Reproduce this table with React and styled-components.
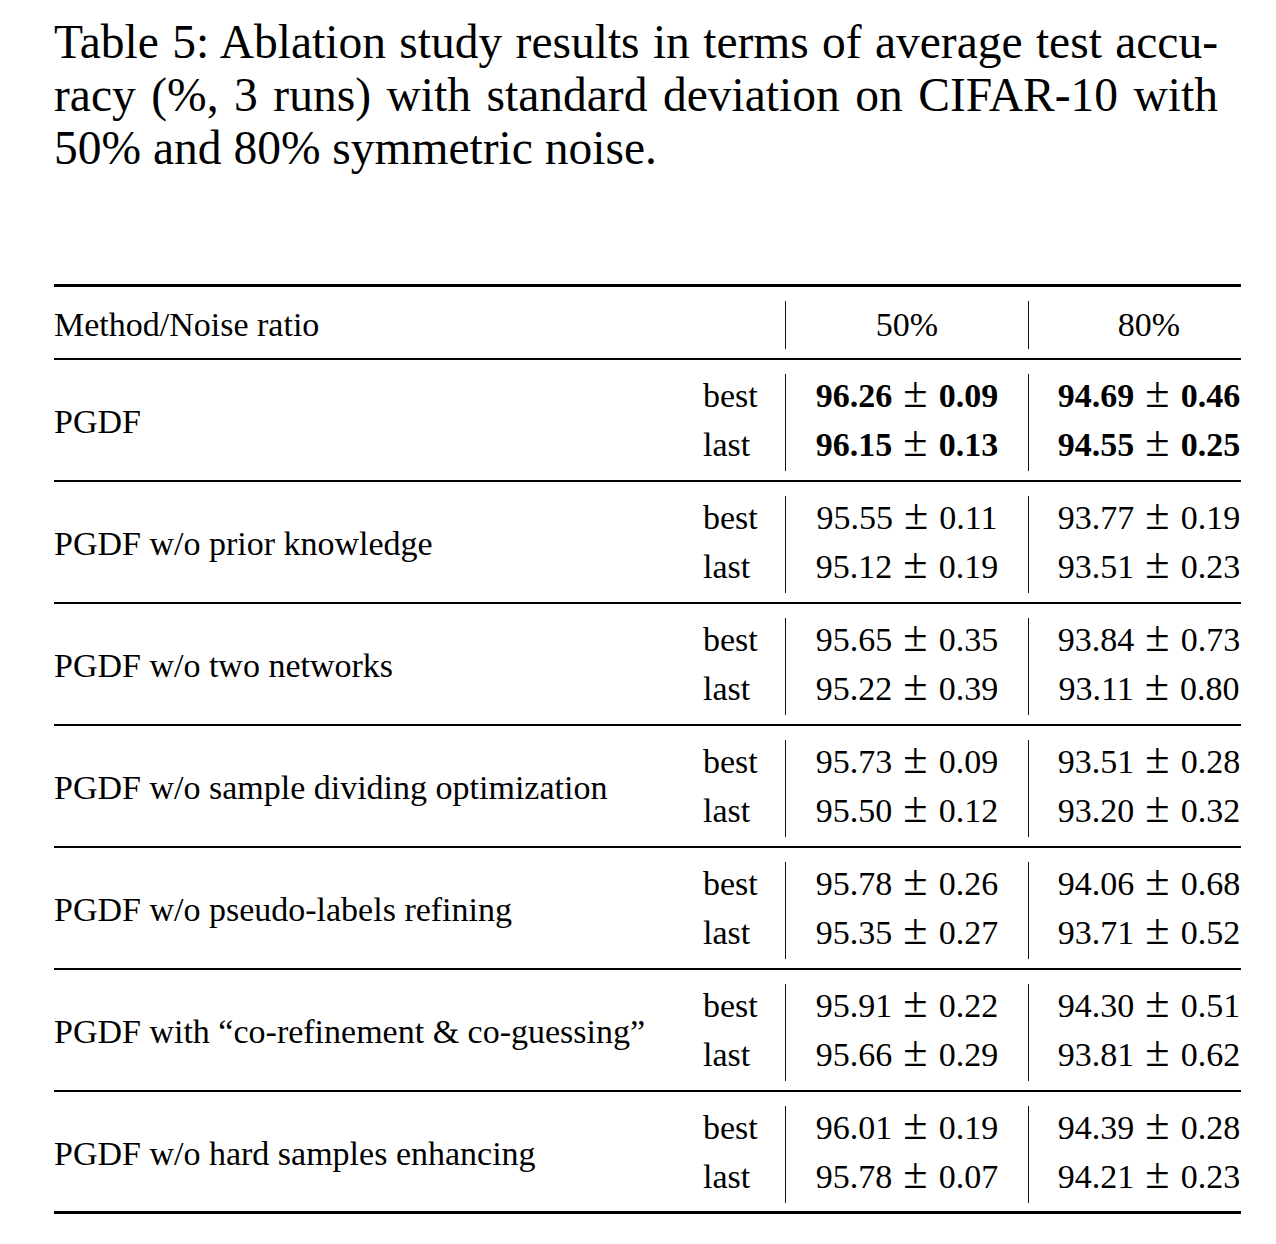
import React from 'react'
import styled, { createGlobalStyle } from 'styled-components'

// ablation results, values are [best, last] for each noise ratio
const rows = [
    { method: 'PGDF', bold: true, n50: ['96.26', '0.09', '96.15', '0.13'], n80: ['94.69', '0.46', '94.55', '0.25'] },
    { method: 'PGDF w/o prior knowledge', n50: ['95.55', '0.11', '95.12', '0.19'], n80: ['93.77', '0.19', '93.51', '0.23'] },
    { method: 'PGDF w/o two networks', n50: ['95.65', '0.35', '95.22', '0.39'], n80: ['93.84', '0.73', '93.11', '0.80'] },
    { method: 'PGDF w/o sample dividing optimization', n50: ['95.73', '0.09', '95.50', '0.12'], n80: ['93.51', '0.28', '93.20', '0.32'] },
    { method: 'PGDF w/o pseudo-labels refining', n50: ['95.78', '0.26', '95.35', '0.27'], n80: ['94.06', '0.68', '93.71', '0.52'] },
    { method: 'PGDF with \u201cco-refinement & co-guessing\u201d', n50: ['95.91', '0.22', '95.66', '0.29'], n80: ['94.30', '0.51', '93.81', '0.62'] },
    { method: 'PGDF w/o hard samples enhancing', n50: ['96.01', '0.19', '95.78', '0.07'], n80: ['94.39', '0.28', '94.21', '0.23'] },
]

const Cell = ({ vals, bold, last }) => (
    <ValueCell $last={last}>
        <Line $bold={bold}>{vals[0]}<Pm>±</Pm>{vals[1]}</Line>
        <Line $bold={bold}>{vals[2]}<Pm>±</Pm>{vals[3]}</Line>
    </ValueCell>
)

const App = () => {
    return (
        <Page>
            <GlobalStyle />
            <Caption>
                <CaptionLine $justify>Table 5: Ablation study results in terms of average test accu-</CaptionLine>
                <CaptionLine $justify>racy (%, 3 runs) with standard deviation on CIFAR-10 with</CaptionLine>
                <CaptionLine>50% and 80% symmetric noise.</CaptionLine>
            </Caption>
            <Table>
                <HeaderRow>
                    <HeadLabel>Method/Noise ratio</HeadLabel>
                    <HeadValue>50%</HeadValue>
                    <HeadValue $last>80%</HeadValue>
                </HeaderRow>
                {rows.map((r, i) => (
                    <Section key={r.method} $end={i === rows.length - 1}>
                        <Label>{r.method}</Label>
                        <TypeCell>
                            <Line>best</Line>
                            <Line>last</Line>
                        </TypeCell>
                        <Cell vals={r.n50} bold={r.bold} />
                        <Cell vals={r.n80} bold={r.bold} last />
                    </Section>
                ))}
            </Table>
        </Page>
    )
}

export default App

const GlobalStyle = createGlobalStyle`
    body{
        margin:0;
        background:#fff;
        color:#000;
        font-family:"Liberation Serif","Times New Roman",serif;
    }
`

const Page = styled.div`
    width:1276px;
    min-height:1244px;
    padding-top:16px;
    box-sizing:border-box;
`

const Caption = styled.div`
    margin-left:54px;
    width:1164px;
    font-size:47.5px;
    line-height:53px;
`

const CaptionLine = styled.div`
    white-space:nowrap;
    text-align:${p => p.$justify ? 'justify' : 'left'};
    text-align-last:${p => p.$justify ? 'justify' : 'left'};
`

const Table = styled.div`
    margin:109px 0 0 54px;
    width:1187px;
    border-top:3px solid #000;
    font-size:34px;
`

const grid = `
    display:grid;
    grid-template-columns:649px 82px 243px 213px;
    padding:14px 0 9px;
`

const HeaderRow = styled.div`
    ${grid}
    border-bottom:2px solid #000;
    line-height:48px;
`

const HeadLabel = styled.div`
    grid-column:span 2;
`

const HeadValue = styled.div`
    border-left:1.5px solid #111;
    text-align:center;
    padding-left:${p => p.$last ? '28px' : '0'};
`

const Section = styled.div`
    ${grid}
    border-bottom:${p => p.$end ? '3px' : '2px'} solid #000;
    padding-bottom:${p => p.$end ? '8px' : '9px'};
`

const Label = styled.div`
    align-self:center;
    line-height:43px;
    white-space:nowrap;
    margin-top:-3px;
`

const TypeCell = styled.div`
    display:flex;
    flex-direction:column;
    gap:6px;
    padding-bottom:5px;
`

const ValueCell = styled.div`
    display:flex;
    flex-direction:column;
    gap:6px;
    padding-bottom:5px;
    border-left:1.5px solid #111;
    align-items:center;
    padding-left:${p => p.$last ? '28px' : '0'};
`

const Line = styled.div`
    line-height:43px;
    white-space:nowrap;
    font-weight:${p => p.$bold ? 'bold' : 'normal'};
`

const Pm = styled.span`
    font-weight:normal;
    font-size:1.3em;
    line-height:0;
    margin:0 0.25em;
`
